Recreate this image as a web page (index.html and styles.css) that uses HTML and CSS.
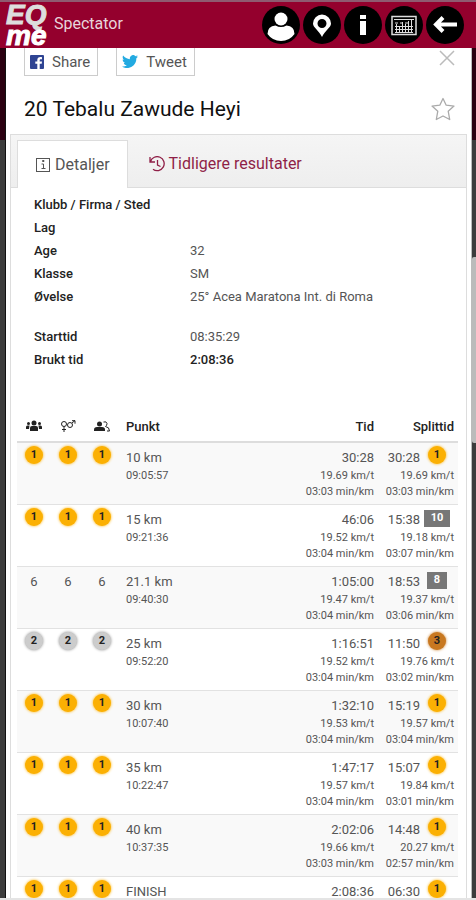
FILE: index.html
```html
<!DOCTYPE html>
<html lang="no">
  <head>
    <meta charset="UTF-8" />
    <meta name="viewport" content="width=device-width, initial-scale=1.0" />
    <title>EQ me Spectator</title>
    <link rel="stylesheet" href="styles.css">
  </head>
  <body>
    <header class="topbar">
      <div class="logo"><span class="logo-eq">EQ</span><span>me</span></div>
      <div class="app-name">Spectator</div>
      <nav class="nav">
        <button aria-label="Profile">
          <svg viewBox="0 0 38 38"><circle cx="19" cy="13" r="6.5" fill="#fff" /><path d="M5.500 28q0-8 8-8.500q5.500 3 11 0q8 .5 8 8.500q-5 7-13.500 7t-13.500-7z" fill="#fff" /></svg>
        </button>
        <button aria-label="Map">
          <svg viewBox="0 0 38 38"><path fill="#fff" fill-rule="evenodd" d="M19 8.500a9 9 0 0 0-9 9c0 4 6 7 9 13.500c3-6.500 9-9.500 9-13.500a9 9 0 0 0-9-9zm0 4.500a4.500 4.500 0 1 1 0 9a4.500 4.500 0 0 1 0-9z" /></svg>
        </button>
        <button aria-label="Info">
          <svg viewBox="0 0 38 38"><path d="M16 9h6v4h-6zM16 15h6v14h-6z" fill="#fff" /></svg>
        </button>
        <button aria-label="Results">
          <svg viewBox="0 0 38 38" fill="none" stroke="#ddd"><rect x="7" y="10.500" width="24" height="18" stroke-width="1.500" /><path d="M9 13.500h20M10 17h3m2 0h3m2 0h3M10 20.500h18M10 23.500h18M10 26.500h18M11.500 18v9M14.500 20v7M17.500 16v11M20.500 18v9M23.500 15v12M26.500 14v13" /></svg>
        </button>
        <button aria-label="Back">
          <svg viewBox="0 0 38 38" fill="none" stroke="#fff" stroke-width="4"><path d="M31 18.500H10M17 11.500l-7 7l7 7" /></svg>
        </button>
      </nav>
    </header>

    <main class="modal">
      <div class="share">
        <button class="share-btn">
          <svg viewBox="0 0 14 14"><rect width="14" height="14" rx="1" fill="#2f4493" /><path d="M9.700 14V8.700h2l.3-2.200H9.700V5.300c0-.7.300-1.100 1.200-1.100H12v-2c-3-.5-4.700.4-4.700 2.800v1.500h-2v2.200h2V14z" fill="#fff" /></svg>
          Share
        </button>
        <button class="share-btn">
          <svg class="bird" viewBox="0 0 24 20"><path fill="#23aae1" d="M24 2.400c-.9.400-1.800.7-2.800.8c1-.6 1.800-1.600 2.200-2.700c-1 .6-2 1-3.100 1.200A4.900 4.900 0 0 0 11.900 6.200C7.800 6 4.200 4 1.700.9c-1.300 2.200-.7 5.100 1.500 6.600c-.8 0-1.600-.2-2.200-.6c-.1 2.300 1.600 4.400 3.900 4.900c-.7.200-1.500.2-2.200.1c.6 2 2.400 3.400 4.600 3.400A9.900 9.900 0 0 1 0 17.300A14 14 0 0 0 21.500 4.900c1-.7 1.800-1.600 2.500-2.500z" /></svg>
          Tweet
        </button>
        <button class="close" aria-label="Close">
          <svg viewBox="0 0 16 16" fill="none" stroke="#bbb" stroke-width="1.500"><path d="M1 1l14 14M15 1L1 15" /></svg>
        </button>
      </div>

      <div class="title">
        <h1>20 Tebalu Zawude Heyi</h1>
        <button class="star" aria-label="Favorite">
          <svg viewBox="0 0 24 24" fill="none" stroke="#aaa" stroke-width="1.300" stroke-linejoin="round"><path d="M12 1.500l3.200 6.700 7.800.9-5.800 5.100 1.500 8.300L12 19l-6.700 3.500 1.500-8.300L1 9.100l7.800-.9z" /></svg>
        </button>
      </div>

      <section class="card">
        <div class="tabs">
          <button class="tab active">
            <svg viewBox="0 0 16 16" fill="none" stroke="#555"><rect x="1.500" y="1.500" width="13" height="13" /><path d="M7.500 3.500h1.500v1H7.500zM6.500 7H8.500v4.500M6.500 11.500h4" /></svg>
            Detaljer
          </button>
          <button class="tab">
            <svg viewBox="0 0 16 16" fill="none" stroke="#8f1f47" stroke-width="1.300"><path d="M1 1v5h5M1.500 5.500a7 7 0 1 1 2.500 7.800M8.500 4v5l3 1.500" /></svg>
            Tidligere resultater
          </button>
        </div>

        <dl class="details">
          <dt>Klubb / Firma / Sted</dt><dd></dd>
          <dt>Lag</dt><dd></dd>
          <dt>Age</dt><dd>32</dd>
          <dt>Klasse</dt><dd>SM</dd>
          <dt>Øvelse</dt><dd>25° Acea Maratona Int. di Roma</dd>
        </dl>
        <dl class="details times">
          <dt>Starttid</dt><dd>08:35:29</dd>
          <dt>Brukt tid</dt><dd><b>2:08:36</b></dd>
        </dl>

        <table class="splits">
          <thead>
            <tr>
              <th class="rank"><svg viewBox="0 0 16 12"><circle cx="8" cy="3" r="2.500" /><path d="M4 11V8q0-2 2-2h4q2 0 2 2v3z" /><circle cx="2.500" cy="3.500" r="1.500" /><circle cx="13.500" cy="3.500" r="1.500" /><path d="M0 9V7q0-1.500 1.500-1.500H3.500L3 9zM16 9V7q0-1.500-1.500-1.500h-2L13 9z" /></svg></th>
              <th class="rank"><svg class="outline" viewBox="0 0 16 12"><circle cx="4" cy="4" r="2.500" /><path d="M4 6.500V12M2 9.500h4M12 3l3-2.500M12 .7h3v3" /><circle cx="10" cy="5" r="2.500" /></svg></th>
              <th class="rank"><svg viewBox="0 0 16 12"><circle cx="5.500" cy="4" r="2.500" /><path d="M0 11V9.500Q0 7 3 7h5q3 0 3 2.500V11z" /><path class="outline" d="M9.500 2q3-1 3.500 1.500q0 2-1.500 3q4 .5 4 4.500h-2.500" /></svg></th>
              <th class="point">Punkt</th>
              <th>Tid</th>
              <th class="split">Splittid</th>
            </tr>
          </thead>
          <tbody>
            <tr>
              <td class="rank"><span class="medal gold">1</span></td>
              <td class="rank"><span class="medal gold">1</span></td>
              <td class="rank"><span class="medal gold">1</span></td>
              <td class="point">10 km<small>09:05:57</small></td>
              <td>30:28<small>19.69 km/t<br>03:03 min/km</small></td>
              <td class="split"><div>30:28<span class="pos"><span class="medal gold">1</span></span></div><small>19.69 km/t<br>03:03 min/km</small></td>
            </tr>
            <tr>
              <td class="rank"><span class="medal gold">1</span></td>
              <td class="rank"><span class="medal gold">1</span></td>
              <td class="rank"><span class="medal gold">1</span></td>
              <td class="point">15 km<small>09:21:36</small></td>
              <td>46:06<small>19.52 km/t<br>03:04 min/km</small></td>
              <td class="split"><div>15:38<span class="pos"><span class="label">10</span></span></div><small>19.18 km/t<br>03:07 min/km</small></td>
            </tr>
            <tr>
              <td class="rank">6</td>
              <td class="rank">6</td>
              <td class="rank">6</td>
              <td class="point">21.1 km<small>09:40:30</small></td>
              <td>1:05:00<small>19.47 km/t<br>03:04 min/km</small></td>
              <td class="split"><div>18:53<span class="pos"><span class="label">8</span></span></div><small>19.37 km/t<br>03:06 min/km</small></td>
            </tr>
            <tr>
              <td class="rank"><span class="medal silver">2</span></td>
              <td class="rank"><span class="medal silver">2</span></td>
              <td class="rank"><span class="medal silver">2</span></td>
              <td class="point">25 km<small>09:52:20</small></td>
              <td>1:16:51<small>19.52 km/t<br>03:04 min/km</small></td>
              <td class="split"><div>11:50<span class="pos"><span class="medal bronze">3</span></span></div><small>19.76 km/t<br>03:02 min/km</small></td>
            </tr>
            <tr>
              <td class="rank"><span class="medal gold">1</span></td>
              <td class="rank"><span class="medal gold">1</span></td>
              <td class="rank"><span class="medal gold">1</span></td>
              <td class="point">30 km<small>10:07:40</small></td>
              <td>1:32:10<small>19.53 km/t<br>03:04 min/km</small></td>
              <td class="split"><div>15:19<span class="pos"><span class="medal gold">1</span></span></div><small>19.57 km/t<br>03:04 min/km</small></td>
            </tr>
            <tr>
              <td class="rank"><span class="medal gold">1</span></td>
              <td class="rank"><span class="medal gold">1</span></td>
              <td class="rank"><span class="medal gold">1</span></td>
              <td class="point">35 km<small>10:22:47</small></td>
              <td>1:47:17<small>19.57 km/t<br>03:04 min/km</small></td>
              <td class="split"><div>15:07<span class="pos"><span class="medal gold">1</span></span></div><small>19.84 km/t<br>03:01 min/km</small></td>
            </tr>
            <tr>
              <td class="rank"><span class="medal gold">1</span></td>
              <td class="rank"><span class="medal gold">1</span></td>
              <td class="rank"><span class="medal gold">1</span></td>
              <td class="point">40 km<small>10:37:35</small></td>
              <td>2:02:06<small>19.66 km/t<br>03:03 min/km</small></td>
              <td class="split"><div>14:48<span class="pos"><span class="medal gold">1</span></span></div><small>20.27 km/t<br>02:57 min/km</small></td>
            </tr>
            <tr>
              <td class="rank"><span class="medal gold">1</span></td>
              <td class="rank"><span class="medal gold">1</span></td>
              <td class="rank"><span class="medal gold">1</span></td>
              <td class="point">FINISH</td>
              <td>2:08:36</td>
              <td class="split"><div>06:30<span class="pos"><span class="medal gold">1</span></span></div></td>
            </tr>
          </tbody>
        </table>
      </section>
    </main>
    <div class="scroll-thumb"></div>
  </body>
</html>
```
FILE: styles.css
```css
* {
  box-sizing: border-box;
}
body {
  margin: 0;
  height: 100vh;
  display: flex;
  flex-direction: column;
  overflow: hidden;
  font-family: Roboto, Arial, sans-serif;
  font-size: 13px;
  color: #555;
  background: linear-gradient(#2a0010 140px, #3c3c3c 140px);
  border-bottom: 2px solid #e4e4e4;
}
button {
  font-family: inherit;
  border: none;
  padding: 0;
  background: none;
  cursor: pointer;
}
svg {
  display: block;
}

/* Top bar */
.topbar {
  flex: none;
  display: flex;
  align-items: center;
  height: 48px;
  padding: 0 12px 0 6px;
  border-top: 2px solid #8f5a70;
  background-color: #94002d;
  color: #e8d5db;
}
.logo {
  display: flex;
  flex-direction: column;
  width: 48px;
  font-family: "Liberation Sans", Arial, sans-serif;
  font-size: 28px;
  font-weight: 700;
  font-style: italic;
  line-height: 21px;
  color: #fff;
  -webkit-text-stroke: 1px;
}
.logo-eq {
  color: #ddd;
}
.app-name {
  flex: 1;
  padding-bottom: 4px;
  font-size: 16px;
}
.nav {
  display: flex;
  gap: 3px;
}
.nav button {
  width: 38px;
  height: 38px;
  border-radius: 50%;
  background-color: #000;
}

/* Modal */
.modal {
  flex: 1;
  min-height: 0;
  margin: 0 4px 0 5px;
  padding: 0 4px;
  overflow: hidden;
  background-color: #fff;
  border-left: 1px solid #111;
  border-right: 1px solid #bbb;
}
.share {
  display: flex;
  gap: 18px;
  padding: 0 12px 0 14px;
}
.share-btn {
  display: flex;
  align-items: center;
  gap: 8px;
  height: 28px;
  padding: 0 7px 0 5px;
  border: 1px solid #ccc;
  border-top: none;
  font-size: 15px;
  color: #555;
}
.share-btn svg {
  width: 14px;
}
.share-btn .bird {
  width: 16px;
}
.close {
  width: 16px;
  height: 20px;
  margin-left: auto;
}
.title {
  display: flex;
  align-items: center;
  justify-content: space-between;
  height: 58px;
  padding: 8px 12px 0 14px;
}
h1 {
  margin: 0;
  font-size: 21px;
  font-weight: 400;
  color: #111;
}
.star {
  width: 24px;
  height: 24px;
}
.card {
  border: 1px solid #ddd;
  border-bottom: none;
}

/* Tabs */
.tabs {
  display: flex;
  align-items: flex-end;
  height: 53px;
  padding-left: 6px;
  border-bottom: 1px solid #ddd;
  background: linear-gradient(#f5f5f5, #eee);
}
.tab {
  display: flex;
  align-items: center;
  gap: 4px;
  height: 48px;
  padding: 0 20px;
  border: 1px solid transparent;
  border-bottom: none;
  font-size: 16px;
  color: #8f1f47;
}
.tab svg {
  width: 16px;
}
.tab.active {
  margin-bottom: -1px;
  padding: 0 17px;
  border-color: #ddd;
  background-color: #fff;
  color: #555;
}

/* Details */
.details {
  display: grid;
  grid-template-columns: 156px 1fr;
  grid-auto-rows: 23px;
  align-items: center;
  margin: 0;
  padding: 5px 23px 0;
}
.details.times {
  padding-top: 17px;
}
dt,
b {
  font-weight: 500;
  color: #222;
}
dd {
  margin: 0;
}

/* Split table */
.splits {
  width: calc(100% - 14px);
  margin: 40px 8px 0 6px;
  border-collapse: separate;
  border-spacing: 0;
  table-layout: fixed;
}
th {
  height: 32px;
  padding: 0;
  border-bottom: 2px solid #ddd;
  font-weight: 500;
  text-align: right;
  color: #222;
}
th svg {
  width: 16px;
  margin: 0 auto;
  fill: #222;
}
th .outline {
  fill: none;
  stroke: #222;
}
td {
  height: 62px;
  padding: 5px 0 4px;
  border-bottom: 1px solid #e2e2e2;
  line-height: 20px;
  text-align: right;
  vertical-align: top;
}
tbody tr:nth-child(odd) {
  background-color: #f9f9f9;
}
.splits .rank {
  width: 34px;
  text-align: center;
}
.splits .point {
  width: 120px;
  padding-left: 7px;
  text-align: left;
}
.splits .split {
  width: 84px;
  padding-right: 4px;
}
small {
  display: block;
  font-size: 11px;
  line-height: 16px;
}
.split div {
  display: flex;
  justify-content: flex-end;
  height: 20px;
}
.pos {
  width: 34px;
  text-align: center;
}
.medal {
  display: block;
  width: 18px;
  height: 18px;
  margin: -2px auto 0;
  border-radius: 50%;
  font-size: 11px;
  font-weight: 700;
  line-height: 18px;
  text-align: center;
  color: #222;
}
.gold {
  background-color: #fbb003;
  box-shadow: 0 0 3px #fbb003;
}
.silver {
  background-color: #ccc;
  box-shadow: 0 0 3px #888;
}
.bronze {
  background-color: #c87820;
  box-shadow: 0 0 3px #c87820;
}
.label {
  display: inline-block;
  min-width: 20px;
  height: 17px;
  padding: 0 7px;
  background-color: #777;
  font-size: 11px;
  font-weight: 700;
  line-height: 16px;
  vertical-align: top;
  color: #fff;
}

/* Scrollbar of the page behind the modal */
.scroll-thumb {
  position: absolute;
  top: 257px;
  right: 0;
  width: 4px;
  height: 186px;
  border-radius: 2px 0 0 2px;
  background-color: #bbb;
}
```
